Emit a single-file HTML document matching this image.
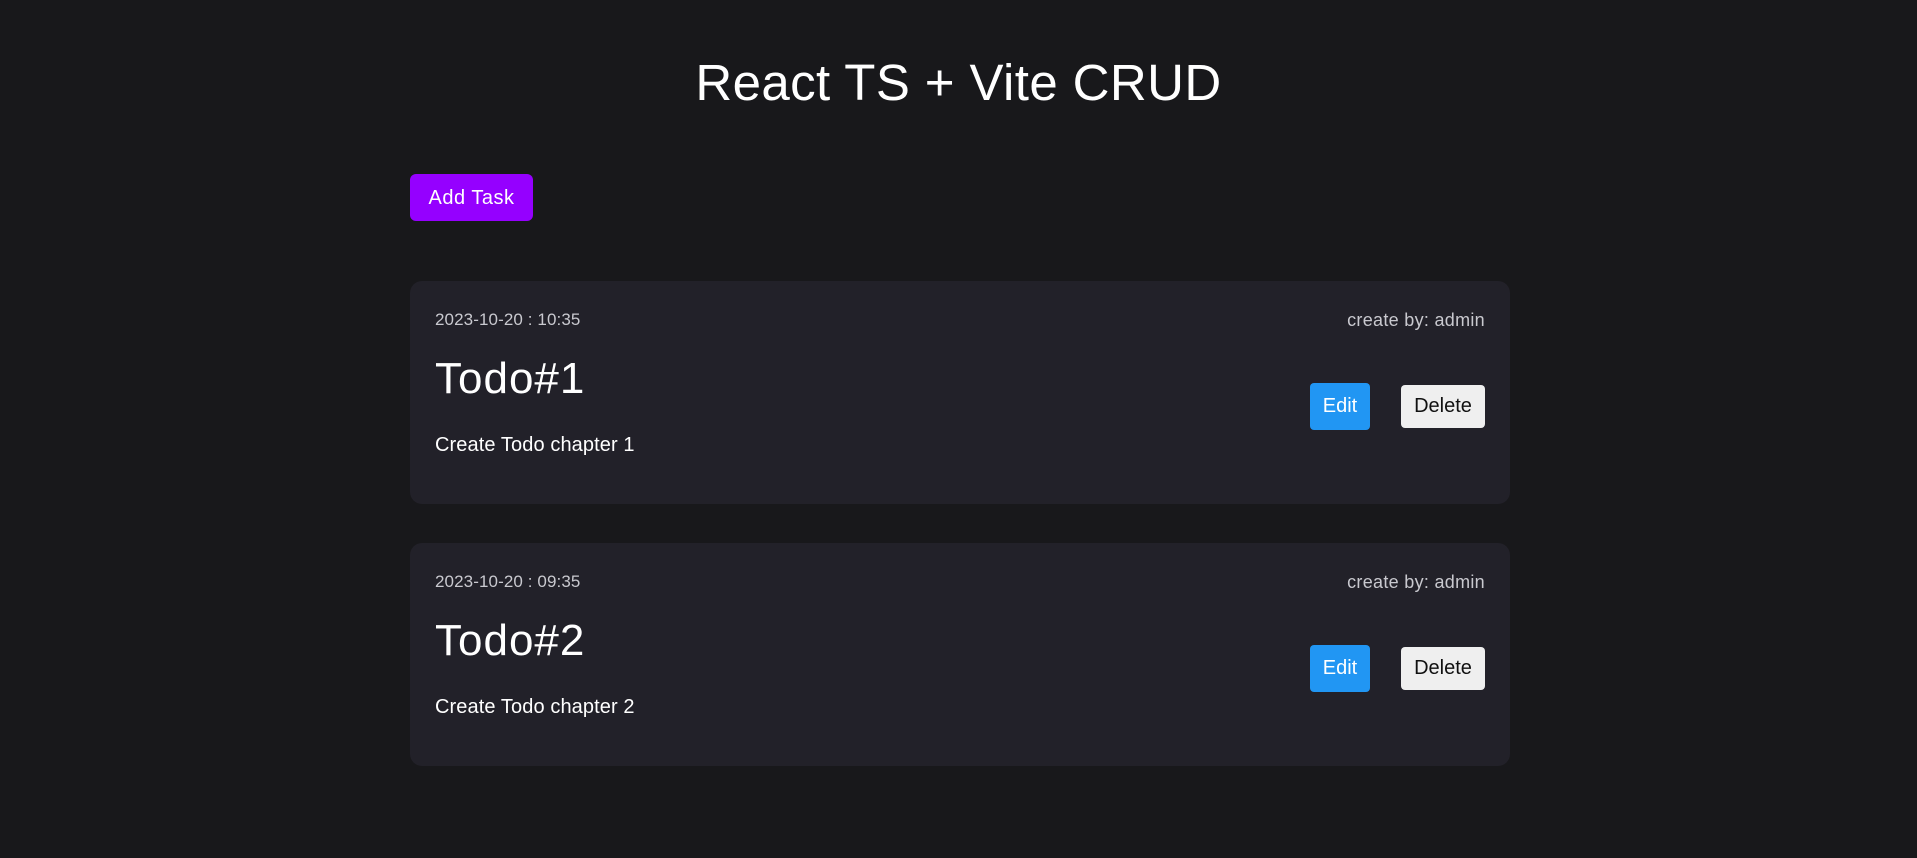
<!DOCTYPE html>
<html><head><meta charset="utf-8"><style>
*{margin:0;padding:0;box-sizing:border-box}
body{width:1917px;height:858px;background:#18181b;font-family:"Liberation Sans",sans-serif;color:#fff;position:relative;overflow:hidden}
.abs{position:absolute;white-space:nowrap}
h1{position:absolute;left:0;width:1917px;text-align:center;top:53px;font-size:51px;font-weight:normal;letter-spacing:0.4px;line-height:60px}
.add{left:410px;top:174px;width:123px;height:47px;background:#9500ff;border-radius:6px;font-size:20px;line-height:48px;text-align:center;letter-spacing:0.5px}
.card{position:absolute;left:410px;width:1100px;height:223px;background:#222129;border-radius:12px}
.ts{left:25px;top:29px;font-size:17px;color:#c9c9cf;letter-spacing:0.1px}
.by{right:25px;top:29px;font-size:18px;color:#c9c9cf;letter-spacing:0.3px}
.title{left:25px;top:73px;font-size:44px;line-height:50px;letter-spacing:1px}
.desc{left:25px;top:153px;font-size:20px;letter-spacing:0.1px}
.edit{left:900px;top:102px;width:60px;height:47px;background:#2196f3;border-radius:4px;font-size:20px;line-height:47px;text-align:center}
.del{left:991px;top:104px;width:84px;height:43px;background:#efefef;color:#111;border-radius:4px;font-size:20px;line-height:43px;text-align:center}
</style></head><body>
<h1>React TS + Vite CRUD</h1>
<div class="abs add">Add Task</div>
<div class="card" style="top:281px">
<div class="abs ts">2023-10-20 : 10:35</div>
<div class="abs by">create by: admin</div>
<div class="abs title">Todo#1</div>
<div class="abs desc">Create Todo chapter 1</div>
<div class="abs edit">Edit</div>
<div class="abs del">Delete</div>
</div>
<div class="card" style="top:543px">
<div class="abs ts">2023-10-20 : 09:35</div>
<div class="abs by">create by: admin</div>
<div class="abs title">Todo#2</div>
<div class="abs desc">Create Todo chapter 2</div>
<div class="abs edit">Edit</div>
<div class="abs del">Delete</div>
</div>
</body></html>
